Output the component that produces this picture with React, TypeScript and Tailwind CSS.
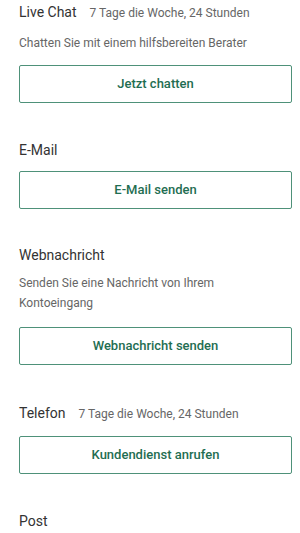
import React from "react";

const Btn = ({ label, mt = "mt-[12px]" }: { label: string; mt?: string }) => (
  <button className={`${mt} flex h-[38px] w-full items-center justify-center rounded-[2px] border border-[#4e9179] bg-white text-[13px] font-medium text-[#1f6e52]`}>
    {label}
  </button>
);

export default function App() {
  return (
    <div className="min-h-[533px] w-[300px] bg-white px-[19px] pr-[8px] font-['Roboto',sans-serif]">
      <div className="flex items-baseline pt-[2px]">
        <span className="text-[14px] leading-[20px] text-[#333]">Live Chat</span>
        <span className="ml-[13px] text-[12px] text-[#666]">7 Tage die Woche, 24 Stunden</span>
      </div>
      <p className="mt-[11px] text-[12px] leading-[20px] text-[#666]">Chatten Sie mit einem hilfsbereiten Berater</p>
      <Btn label="Jetzt chatten" />

      <div className="mt-[37px] text-[14px] leading-[20px] text-[#333]">E-Mail</div>
      <Btn label="E-Mail senden" mt="mt-[11px]" />

      <div className="mt-[36px] text-[14px] leading-[20px] text-[#333]">Webnachricht</div>
      <p className="mt-[8px] text-[12px] leading-[20px] text-[#666]">
        Senden Sie eine Nachricht von Ihrem
        <br />
        Kontoeingang
      </p>
      <Btn label="Webnachricht senden" mt="mt-[14px]" />

      <div className="mt-[38px] flex items-baseline">
        <span className="text-[14px] leading-[20px] text-[#333]">Telefon</span>
        <span className="ml-[13px] text-[12px] text-[#666]">7 Tage die Woche, 24 Stunden</span>
      </div>
      <Btn label="Kundendienst anrufen" mt="mt-[13px]" />

      <div className="mt-[37px] text-[14px] leading-[20px] text-[#333]">Post</div>
    </div>
  );
}
